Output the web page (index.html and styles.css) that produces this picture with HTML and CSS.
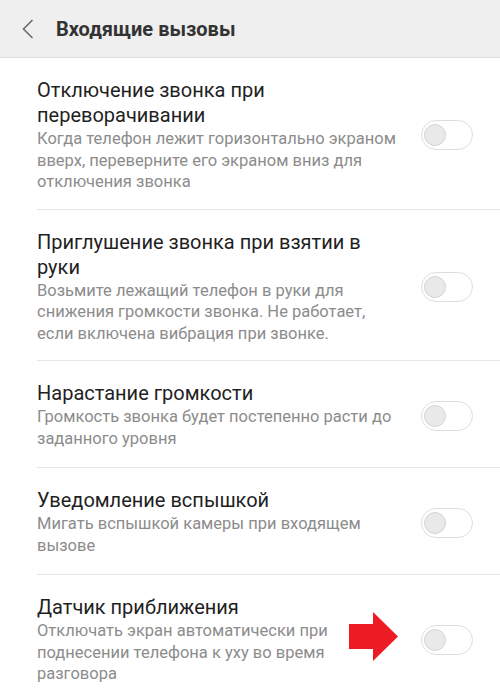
FILE: index.html
```html
<!DOCTYPE html>
<html>
<head>
    <title>Входящие вызовы</title>
    <meta name="viewport" content="width=device-width, initial-scale=1.0">
    <link rel="stylesheet" href="styles.css">
</head>
<body>
    <div class="screen">
        <div class="header">
            <svg class="back" width="12" height="20" viewBox="0 0 12 20" fill="none">
                <path d="M10.5 1 L1.5 10 L10.5 19" stroke="#6b6b6b" stroke-width="1.6"/>
            </svg>
            <h1 class="title">Входящие вызовы</h1>
        </div>

        <div class="list">
            <div class="row">
                <div class="text">
                    <div class="row-title">Отключение звонка при переворачивании</div>
                    <div class="row-sub">Когда телефон лежит горизонтально экраном вверх, переверните его экраном вниз для отключения звонка</div>
                </div>
                <div class="toggle"><span class="knob"></span></div>
            </div>

            <div class="row">
                <div class="text">
                    <div class="row-title">Приглушение звонка при взятии в руки</div>
                    <div class="row-sub">Возьмите лежащий телефон в руки для снижения громкости звонка. Не работает, если включена вибрация при звонке.</div>
                </div>
                <div class="toggle"><span class="knob"></span></div>
            </div>

            <div class="row">
                <div class="text">
                    <div class="row-title">Нарастание громкости</div>
                    <div class="row-sub">Громкость звонка будет постепенно расти до заданного уровня</div>
                </div>
                <div class="toggle"><span class="knob"></span></div>
            </div>

            <div class="row">
                <div class="text">
                    <div class="row-title">Уведомление вспышкой</div>
                    <div class="row-sub">Мигать вспышкой камеры при входящем вызове</div>
                </div>
                <div class="toggle"><span class="knob"></span></div>
            </div>

            <div class="row last">
                <div class="text">
                    <div class="row-title">Датчик приближения</div>
                    <div class="row-sub">Отключать экран автоматически при поднесении телефона к уху во время разговора</div>
                </div>
                <div class="toggle"><span class="knob"></span></div>
                <svg class="arrow" width="50" height="50" viewBox="0 0 50 50">
                    <path d="M0 12 H24 V0 L49 24.5 L24 49 V37 H0 Z" fill="#ed1c24"/>
                </svg>
            </div>
        </div>
    </div>
</body>
</html>
```

FILE: styles.css
```css
body {
    margin: 0;
    font-family: Roboto, 'Noto Sans', sans-serif;
    background: #ffffff;
    overflow: hidden;
}

.screen {
    width: 500px;
}

.header {
    height: 58px;
    background: #efefef;
    border-bottom: 1px solid #dcdcdc;
    display: flex;
    align-items: center;
    box-sizing: border-box;
    padding-left: 22px;
}

.back {
    margin-top: 1px;
}

.title {
    margin: 0 0 0 22px;
    font-size: 20px;
    font-weight: 700;
    color: #333333;
}

.row {
    position: relative;
    display: flex;
    align-items: center;
    box-sizing: border-box;
    min-height: 107px;
    margin-left: 37px;
    padding: 20px 27px 16px 0;
    border-bottom: 1px solid #e6e6e6;
}

.row.last {
    border-bottom: none;
}

.text {
    align-self: flex-start;
    flex: 1;
    max-width: 364px;
}

.row-title {
    max-width: 345px;
    font-size: 20px;
    line-height: 25px;
    color: #1f1f1f;
}

.row-sub {
    font-size: 16.5px;
    line-height: 21.5px;
    color: #8c8c8c;
}

.toggle {
    margin-left: auto;
    width: 52px;
    height: 30px;
    border: 1px solid #dedede;
    border-radius: 15px;
    display: flex;
    align-items: center;
    padding-left: 2px;
    box-sizing: border-box;
    flex-shrink: 0;
}

.knob {
    width: 22px;
    height: 22px;
    box-sizing: border-box;
    border-radius: 50%;
    background: #e9e9e9;
    border: 1px solid #d4d4d4;
}

.arrow {
    position: absolute;
    left: 312px;
    top: 37px;
}
```
